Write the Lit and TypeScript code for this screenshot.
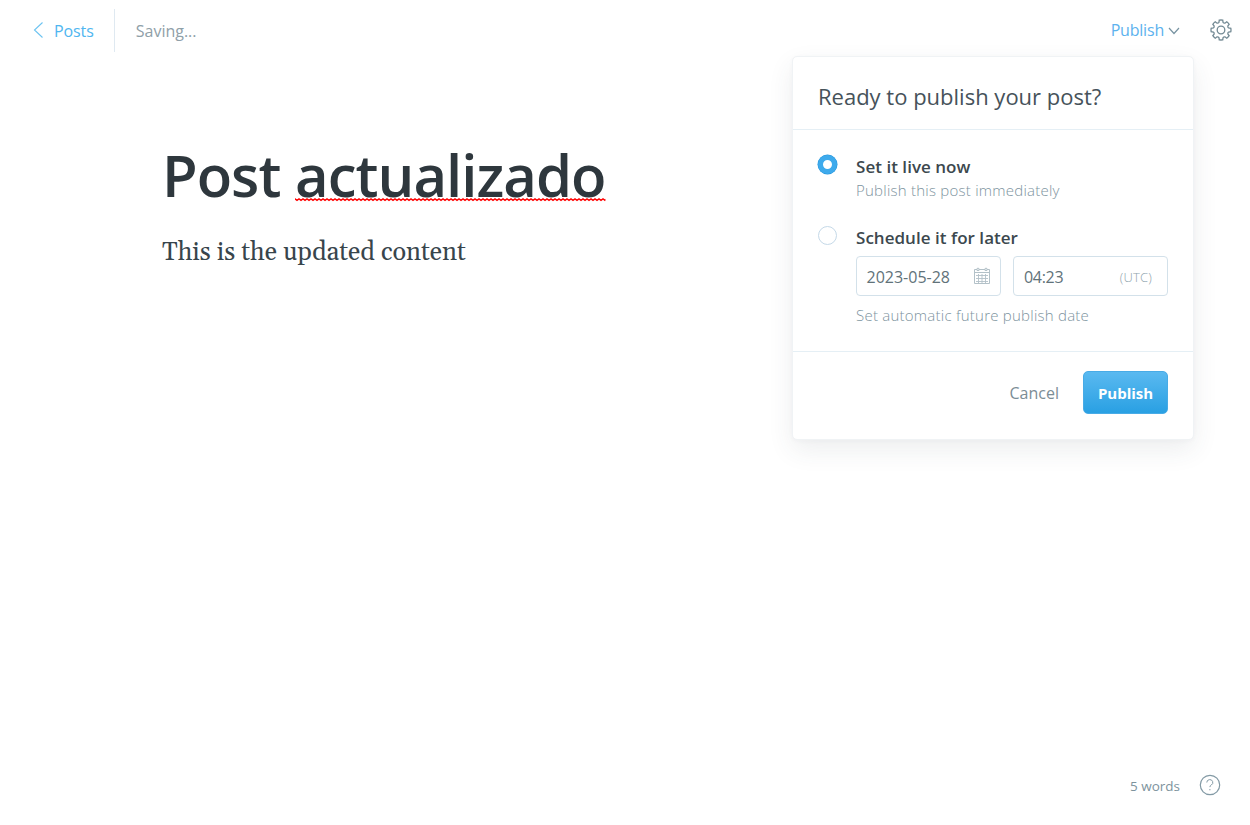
import { LitElement, html, css, svg } from "lit";
import { customElement, property, state } from "lit/decorators.js";

/** Eight-toothed cog outline, centred in a 24-unit box. */
const cogPath = (() => {
  const pts: string[] = [];
  const teeth = 8;
  for (let i = 0; i < teeth; i++) {
    const mid = (i * 360) / teeth;
    for (const [offset, radius] of [
      [-15, 7.9],
      [-10, 10],
      [10, 10],
      [15, 7.9],
    ]) {
      const a = ((mid + offset) * Math.PI) / 180;
      const x = (12 + radius * Math.sin(a)).toFixed(2);
      const y = (12 - radius * Math.cos(a)).toFixed(2);
      pts.push(`${x} ${y}`);
    }
  }
  let d = `M${pts[0]}`;
  for (let i = 0; i < teeth; i++) {
    const p = i * 4;
    const next = pts[(p + 4) % pts.length];
    d += `L${pts[p + 1]}A10 10 0 0 1 ${pts[p + 2]}L${pts[p + 3]}A1.9 1.9 0 0 0 ${next}`;
  }
  return d + "Z";
})();

@customElement("publish-menu")
export class PublishMenu extends LitElement {
  @property() date = "2023-05-28";
  @property() time = "04:23";
  @state() private mode: "now" | "later" = "now";

  static styles = css`
    :host {
      display: block;
      box-sizing: border-box;
      width: 402px;
      border: 1px solid #f0f3f5;
      border-radius: 5px;
      background: #fff;
      box-shadow: 0 10px 26px rgba(60, 70, 80, 0.09), 0 1px 4px rgba(60, 70, 80, 0.03);
      color: #394047;
      font-family: "Open Sans", "Noto Sans", sans-serif;
    }
    header {
      box-sizing: border-box;
      height: 73px;
      padding: 24px 25px 0;
      border-bottom: 1px solid #e5eff5;
      font-size: 22px;
      line-height: 30px;
      font-weight: 400;
      color: #46525a;
    }
    section {
      display: flex;
      flex-direction: column;
      box-sizing: border-box;
      height: 222px;
      padding: 25px 25px 0;
      gap: 25px;
      border-bottom: 1px solid #e5eff5;
    }
    .option {
      display: grid;
      grid-template-columns: 20px 1fr;
      column-gap: 18px;
    }
    .radio {
      box-sizing: border-box;
      width: 19px;
      height: 19px;
      border: 1px solid #c5d9e8;
      border-radius: 50%;
      background: #fff;
    }
    .radio.on {
      border: 5px solid #3eaaec;
      box-shadow: 0 0 0 0.5px #2596dc;
    }
    .label {
      height: 24px;
      line-height: 24px;
      font-size: 17px;
      font-weight: 600;
      letter-spacing: 0.03px;
      color: #3c484e;
    }
    .hint {
      height: 22px;
      line-height: 22px;
      font-size: 15px;
      font-weight: 300;
      letter-spacing: 0.24px;
      color: #7d939e;
    }
    .fields {
      display: flex;
      gap: 12px;
      margin-right: -1px;
      padding: 6px 0 8px;
    }
    .field {
      display: flex;
      align-items: center;
      justify-content: space-between;
      box-sizing: border-box;
      height: 40px;
      padding: 2px 10px 0;
      border: 1px solid #d3e1ea;
      border-radius: 4px;
      font-size: 16px;
      font-weight: 400;
      color: #617279;
    }
    .date {
      width: 145px;
    }
    .date span {
      margin-left: -0.5px;
    }
    .time {
      width: 155px;
      padding-right: 15px;
      letter-spacing: -0.3px;
    }
    .zone {
      font-size: 13px;
      font-weight: 300;
      letter-spacing: 0.2px;
      color: #8fa3ad;
    }
    .cal {
      display: block;
      margin-top: -4px;
    }
    footer {
      display: flex;
      justify-content: flex-end;
      align-items: center;
      gap: 24px;
      height: 43px;
      padding: 19px 25px 25px;
    }
    .cancel {
      padding-top: 1px;
      font-size: 16px;
      font-weight: 400;
      color: #7b8d96;
    }
    .go {
      box-sizing: border-box;
      width: 85px;
      height: 43px;
      border: 1px solid #48abe6;
      border-radius: 5px;
      background: linear-gradient(#5ab9f0, #29a0e3);
      color: #fff;
      font-size: 15px;
      font-weight: 700;
      line-height: 42px;
      text-align: center;
    }
  `;

  render() {
    return html`
      <header>Ready to publish your post?</header>
      <section>
        <div class="option" @click=${() => (this.mode = "now")}>
          <div class="radio ${this.mode === "now" ? "on" : ""}"></div>
          <div>
            <div class="label">Set it live now</div>
            <div class="hint">Publish this post immediately</div>
          </div>
        </div>
        <div class="option" @click=${() => (this.mode = "later")}>
          <div class="radio ${this.mode === "later" ? "on" : ""}"></div>
          <div>
            <div class="label">Schedule it for later</div>
            <div class="fields">
              <div class="field date">
                <span>${this.date}</span>
                <svg class="cal" width="16" height="17" viewBox="0 0 16 17" fill="none" stroke="#b3c1c8">
                  <path d="M.5 2.5h15v14H.5zM.5 5.5h15" />
                  <path d="M2 8.500h12M2 11.500h12M2 14.500h12M4.500 7v9M8 7v9M11.500 7v9" stroke-width=".9" />
                  <path fill="#fff" d="M3 1.500a1.500 1 0 0 1 2 0v2H3zM11 1.500a1.500 1 0 0 1 2 0v2h-2z" />
                </svg>
              </div>
              <div class="field time">
                <span>${this.time}</span><span class="zone">(UTC)</span>
              </div>
            </div>
            <div class="hint">Set automatic future publish date</div>
          </div>
        </div>
      </section>
      <footer>
        <div class="cancel">Cancel</div>
        <div class="go">Publish</div>
      </footer>
    `;
  }
}

@customElement("app-root")
export class AppRoot extends LitElement {
  static styles = css`
    :host {
      display: flex;
      flex-direction: column;
      position: relative;
      box-sizing: border-box;
      height: 825px;
      overflow: hidden;
      background: #fff;
      font-family: "Open Sans", "Noto Sans", sans-serif;
      font-size: 16px;
      font-weight: 400;
    }
    .bar {
      display: flex;
      align-items: center;
      height: 43px;
      padding: 9px 18px 0 33px;
    }
    .back {
      display: flex;
      align-items: center;
      gap: 10px;
      height: 43px;
      padding-right: 20px;
      border-right: 1px solid #dfe9f1;
      color: #4fb6f0;
    }
    .back svg {
      margin-top: -1px;
    }
    .back span {
      letter-spacing: -0.1px;
      margin-right: 0.5px;
    }
    .status {
      flex: 1;
      padding-left: 20.5px;
      color: #8fa0a8;
    }
    .bar span {
      padding-top: 1px;
    }
    .trigger {
      display: flex;
      align-items: center;
      gap: 4px;
      margin: -2px 30px 0 0;
      color: #5cb2ee;
      letter-spacing: -0.2px;
    }
    .trigger svg {
      margin-top: 2px;
    }
    .gear {
      margin-top: -2px;
    }
    .menu {
      position: absolute;
      top: 56px;
      right: 56px;
    }
    main {
      flex: 1;
      padding: 83px 0 0 162px;
    }
    h1 {
      margin: 0;
      font-size: 58px;
      line-height: 80px;
      font-weight: 600;
      letter-spacing: -0.97px;
      color: #2e373d;
    }
    .typo {
      position: relative;
      display: inline-block;
      margin-left: 0.6px;
    }
    .squiggle {
      position: absolute;
      left: 0;
      top: 63px;
      width: 100%;
      height: 4px;
    }
    p {
      margin: 20px 0 0;
      font-family: Gelasio, "Liberation Serif", serif;
      font-size: 25.3px;
      line-height: 36px;
      color: #38454c;
    }
    .foot {
      display: flex;
      justify-content: flex-end;
      align-items: center;
      gap: 19px;
      height: 24px;
      padding: 0 29px 28px 0;
      font-size: 13.5px;
      color: #7d939d;
    }
    .foot span {
      padding-top: 1px;
    }
  `;

  render() {
    return html`
      <div class="bar">
        <div class="back">
          <svg width="11" height="16" viewBox="0 0 11 16" fill="none" stroke="#6cc3f1" stroke-width="1.1">
            <path d="M9.500 .5 1.500 8l8 7.500" />
          </svg>
          <span>Posts</span>
        </div>
        <span class="status">Saving...</span>
        <div class="trigger">
          <span>Publish</span>
          <svg width="12" height="8" viewBox="0 0 12 8" fill="none" stroke="#7793a1" stroke-width="1.2">
            <path d="M1 1l5 5.500L11 1" />
          </svg>
        </div>
        <svg class="gear" width="22" height="22" viewBox="1 1 22 22" fill="none" stroke="#738a94" stroke-width="1.3">
          <path d=${cogPath} />
          <circle cx="12" cy="12" r="3.800" />
        </svg>
      </div>
      <main>
        <h1>
          Post
          <span class="typo"
            >actualizado<svg class="squiggle">
              <defs>
                <pattern id="wave" width="4" height="4" patternUnits="userSpaceOnUse">
                  ${svg`<path d="M-1 .5 0 .8 2 2.400 4 .8 5 .5" fill="none" stroke="#f00" stroke-width="1.400" />`}
                </pattern>
              </defs>
              <rect width="100%" height="4" fill="url(#wave)" /></svg
          ></span>
        </h1>
        <p>This is the updated content</p>
      </main>
      <div class="foot">
        <span>5 words</span>
        <svg width="22" height="22" viewBox="0 0 22 22" fill="none" stroke="#839aa5">
          <circle cx="11" cy="11" r="9.700" stroke-width="1.200" />
          <path d="M7.800 8.500a3 2.900 0 1 1 4.500 2.500c-.9.500-1.400 1-1.400 2.100" />
          <path d="M10.900 15v1.300" />
        </svg>
      </div>
      <publish-menu class="menu"></publish-menu>
    `;
  }
}
